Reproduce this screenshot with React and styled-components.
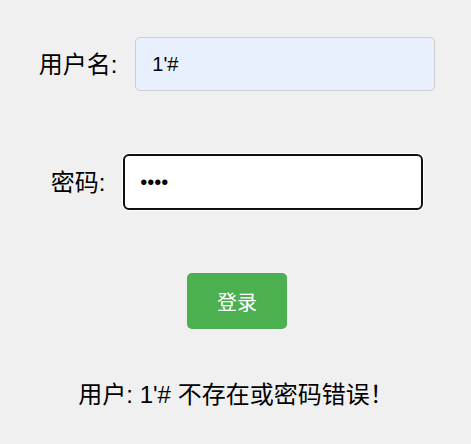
import React from "react";
import styled, { createGlobalStyle } from "styled-components";

const Global = createGlobalStyle`
  html, body { margin: 0; padding: 0; background: #f0f0f0; }
  body { font-family: "Liberation Sans", "Noto Sans CJK SC", sans-serif; color: #000; }
`;

const Page = styled.div`
  display: flex;
  flex-direction: column;
  align-items: center;
  padding-top: 37px;
  padding-left: 3px;
`;

const Row = styled.div`
  display: flex;
  align-items: center;
  justify-content: center;
  height: 54px;
  margin-bottom: 64px;
`;

const Label = styled.label`
  font-size: 24px;
  margin-right: 18px;
  padding-bottom: 3px;
  white-space: nowrap;
`;

const Input = styled.input`
  box-sizing: border-box;
  width: 300px;
  height: ${(p) => (p.$focused ? 56 : 54)}px;
  padding: 0 ${(p) => (p.$focused ? 15 : 16)}px;
  font-size: 20px;
  font-family: "Liberation Sans", "Noto Sans CJK SC", sans-serif;
  color: #000;
  background: ${(p) => (p.$autofill ? "#e8f0fe" : "#fff")};
  border: ${(p) => (p.$focused ? "2px solid #101010" : "1px solid #ccc")};
  border-radius: ${(p) => (p.$focused ? 6 : 5)}px;
  box-shadow: ${(p) => (p.$focused ? "0 0 0 1px #fff" : "none")};
  outline: none;
`;

const Button = styled.button`
  width: 100px;
  height: 56px;
  border: none;
  border-radius: 5px;
  background: #4caf50;
  color: #fff;
  font-size: 20px;
  font-family: "Liberation Sans", "Noto Sans CJK SC", sans-serif;
  cursor: pointer;
`;

const Message = styled.p`
  margin: 50px 0 0;
  padding-right: 2px;
  font-size: 24px;
  line-height: 32px;
`;

export default function App() {
  return (
    <>
      <Global />
      <Page>
        <Row>
          <Label>用户名:</Label>
          <Input $autofill defaultValue="1'#" />
        </Row>
        <Row>
          <Label>密码:</Label>
          <Input $focused type="password" defaultValue="1234" />
        </Row>
        <Button>登录</Button>
        <Message>用户: 1'# 不存在或密码错误！</Message>
      </Page>
    </>
  );
}
